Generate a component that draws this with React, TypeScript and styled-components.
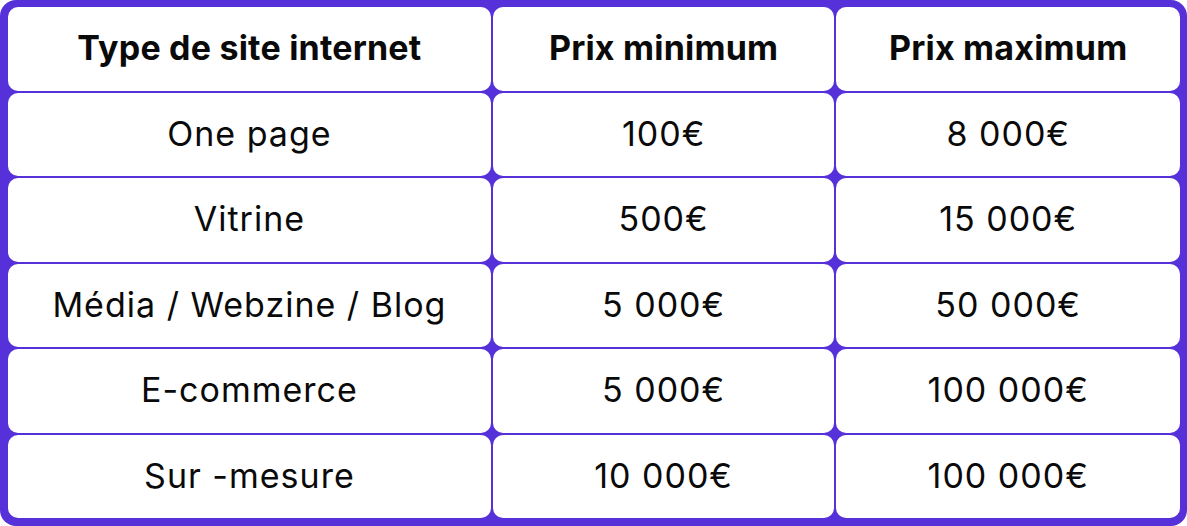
import React from "react";
import styled, { createGlobalStyle } from "styled-components";

const GlobalStyle = createGlobalStyle`
    html, body {
        margin: 0;
        padding: 0;
        background: #ffffff;
    }
    body {
        font-family: Inter, "Liberation Sans", sans-serif;
        color: #0a0a0a;
    }
`;

const Table = styled.div`
    width: 1187px;
    height: 526px;
    box-sizing: border-box;
    padding: 7px 7px 8px 8px;
    background: #5631d9;
    border-radius: 16px;
    display: grid;
    grid-template-columns: 482fr 341fr 343fr;
    grid-auto-rows: 1fr;
    gap: 2px;
`;

const Cell = styled.div<{ $head?: boolean }>`
    background: #ffffff;
    border-radius: 10px;
    display: flex;
    align-items: center;
    justify-content: center;
    padding-bottom: 2px;
    font-size: 34px;
    font-weight: ${(p) => (p.$head ? 700 : 400)};
    letter-spacing: ${(p) => (p.$head ? "0.2px" : "1px")};
    white-space: nowrap;
`;

const headers = ["Type de site internet", "Prix minimum", "Prix maximum"];

const rows = [
    ["One page", "100€", "8 000€"],
    ["Vitrine", "500€", "15 000€"],
    ["Média / Webzine / Blog", "5 000€", "50 000€"],
    ["E-commerce", "5 000€", "100 000€"],
    ["Sur -mesure", "10 000€", "100 000€"],
];

function App() {
    return (
        <>
            <GlobalStyle />
            <Table>
                {headers.map((h) => (
                    <Cell key={h} $head>{h}</Cell>
                ))}
                {rows.map((row) =>
                    row.map((value, i) => (
                        <Cell key={row[0] + i}>{value}</Cell>
                    ))
                )}
            </Table>
        </>
    );
}

export default App;
